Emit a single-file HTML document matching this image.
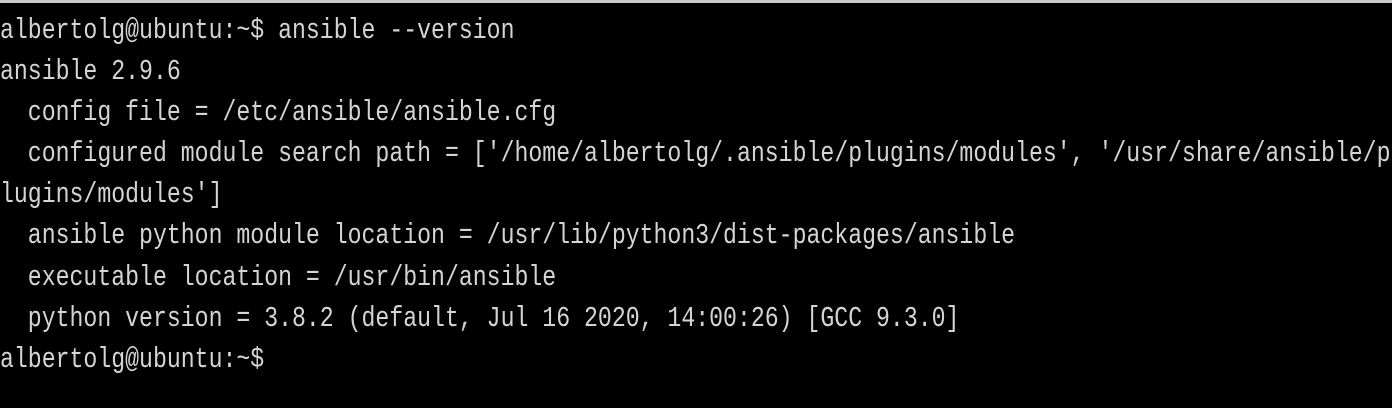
<!DOCTYPE html>
<html><head><style>
html,body{margin:0;padding:0;background:#000;width:1392px;height:408px;overflow:hidden}
.top{position:absolute;left:0;top:0;width:1392px;height:3px;background:#c9c9c9}
.t{position:absolute;left:0;top:10px;transform:scaleX(0.799);transform-origin:0 0;font-family:"Liberation Mono",monospace;font-size:29px;line-height:41.1px;color:#d4d4d4;white-space:pre}
</style></head><body>
<div class="top"></div>
<div class="t">albertolg@ubuntu:~$ ansible --version
ansible 2.9.6
  config file = /etc/ansible/ansible.cfg
  configured module search path = ['/home/albertolg/.ansible/plugins/modules', '/usr/share/ansible/p
lugins/modules']
  ansible python module location = /usr/lib/python3/dist-packages/ansible
  executable location = /usr/bin/ansible
  python version = 3.8.2 (default, Jul 16 2020, 14:00:26) [GCC 9.3.0]
albertolg@ubuntu:~$</div>
</body></html>
